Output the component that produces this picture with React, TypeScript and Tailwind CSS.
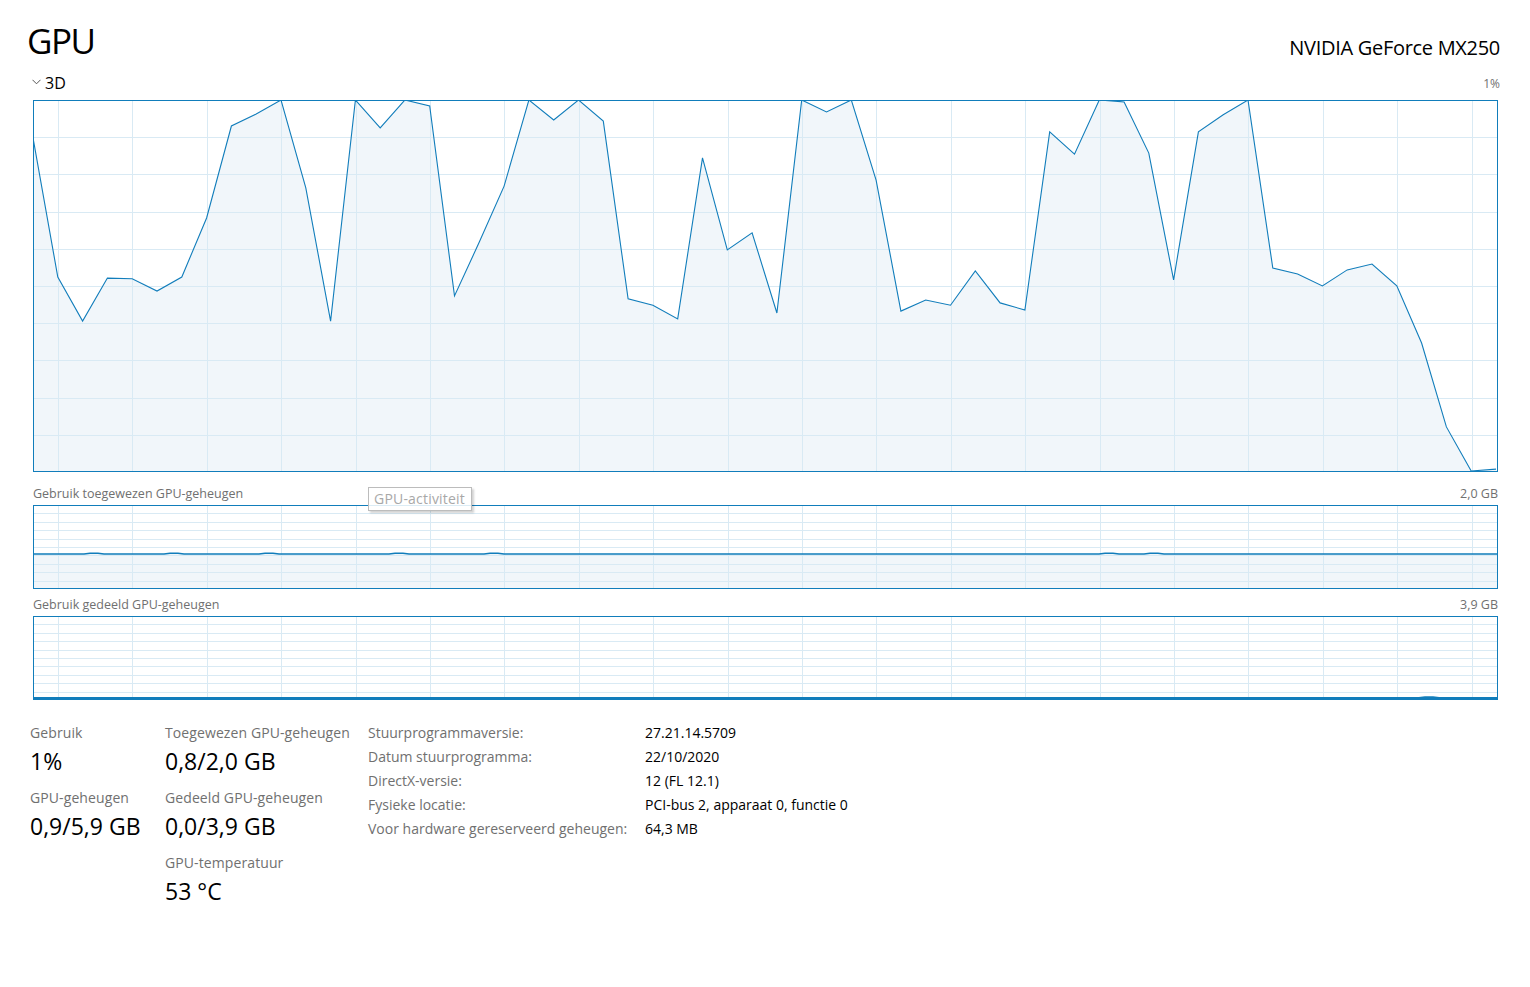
import React from "react";

// GPU usage (percent) for the last 60 samples, oldest first
const USAGE = [
  89.8, 52.3, 40.4, 52.0, 51.8, 48.5, 52.3, 68.2, 93.0, 96.2,
  100, 76.3, 40.4, 100, 92.5, 100, 98.4, 47.2, 61.7, 76.8,
  100, 94.6, 100, 94.3, 46.4, 44.7, 41.0, 84.4, 59.6, 64.2,
  42.6, 100, 96.8, 100, 78.4, 43.1, 46.1, 44.7, 53.9, 45.3,
  43.4, 91.4, 85.4, 100, 99.5, 85.7, 51.5, 91.4, 96.0, 100,
  54.7, 53.1, 49.9, 54.2, 55.8, 49.9, 34.5, 11.9, 0, 0.5,
];

const W = 1463;
const STEP = W / 59;
const GRID = "#d9eaf4";
const LINE = "#117dbb";
const FILL = "#f1f6fa";

function VGrid({ h }: { h: number }) {
  const xs = Array.from({ length: 20 }, (_, j) => Math.round(24 + j * 74.4) + 0.5);
  return (
    <>
      {xs.map((x) => (
        <line key={x} x1={x} x2={x} y1={0} y2={h} stroke={GRID} strokeWidth={1} />
      ))}
    </>
  );
}

function HGrid({ h, rows }: { h: number; rows: number }) {
  const ys = Array.from({ length: rows - 1 }, (_, k) => Math.round(((k + 1) * (h + 2)) / rows) - 1 + 0.5);
  return (
    <>
      {ys.map((y) => (
        <line key={y} x1={0} x2={W} y1={y} y2={y} stroke={GRID} strokeWidth={1} />
      ))}
    </>
  );
}

function UsageChart() {
  const H = 370;
  const pts = USAGE.map((v, i) => `${(-1 + i * STEP).toFixed(1)},${(H - v * 3.71).toFixed(1)}`);
  const area = [...pts, `${W},${H}`, `-1,${H}`].join(" ");
  return (
    <svg width={W} height={H} className="block">
      <polygon points={area} fill={FILL} />
      <HGrid h={H} rows={10} />
      <VGrid h={H} />
      <polyline points={pts.join(" ")} fill="none" stroke={LINE} strokeWidth={1.1} />
    </svg>
  );
}

function MemChart({ level, bumps, thick }: { level: number; bumps: number[]; thick?: boolean }) {
  const H = 82;
  const y = level;
  const pts: string[] = [`0,${y}`];
  bumps.forEach((b) => {
    pts.push(`${b},${y}`, `${b + 6},${y - 0.8}`, `${b + 14},${y - 0.8}`, `${b + 20},${y}`);
  });
  pts.push(`${W},${y}`);
  return (
    <svg width={W} height={H} className="block">
      <rect x={0} y={y} width={W} height={H - y} fill={FILL} />
      <HGrid h={H} rows={10} />
      <VGrid h={H} />
      <polyline points={pts.join(" ")} fill="none" stroke={LINE} strokeWidth={thick ? 3 : 1.5} />
    </svg>
  );
}

function Stat({ label, value }: { label: string; value: string }) {
  return (
    <div className="flex flex-col mb-[11px]">
      <span className="text-[14px] leading-[20px] text-[#707070] tracking-[0.1px]">{label}</span>
      <span className="mt-[2px] text-[23px] leading-[32px] text-black">{value}</span>
    </div>
  );
}

const DETAILS: [string, string][] = [
  ["Stuurprogrammaversie:", "27.21.14.5709"],
  ["Datum stuurprogramma:", "22/10/2020"],
  ["DirectX-versie:", "12 (FL 12.1)"],
  ["Fysieke locatie:", "PCI-bus 2, apparaat 0, functie 0"],
  ["Voor hardware gereserveerd geheugen:", "64,3 MB"],
];

export default function App() {
  return (
    <div className="w-[1530px] h-[987px] bg-white overflow-hidden font-['Open_Sans','Noto_Sans',sans-serif] text-black">
      <div className="flex items-baseline justify-between pl-[27px] pr-[30px] pt-[21px]">
        <h1 className="text-[35px] leading-[40px] font-normal tracking-[-1.5px]">GPU</h1>
        <span className="text-[20px] leading-[26px] tracking-[-0.3px] relative top-[1px]">NVIDIA GeForce MX250</span>
      </div>

      <div className="flex items-center justify-between pl-[32px] pr-[30px] mt-[12px] h-[20px]">
        <div className="flex items-center gap-[4px]">
          <svg width="9" height="6" viewBox="0 0 9 6" className="mt-[-2px]">
            <polyline points="0.5,0.8 4.5,4.8 8.5,0.8" fill="none" stroke="#555" strokeWidth="1" />
          </svg>
          <span className="text-[16px] leading-[20px]">3D</span>
        </div>
        <span className="text-[12px] leading-[16px] text-[#707070] mt-[1px]">1%</span>
      </div>

      <div className="ml-[33px] mr-[32px] mt-[7px] border border-[#117dbb] h-[372px] overflow-hidden">
        <UsageChart />
      </div>

      <div className="relative ml-[33px] mr-[32px] mt-[12px]">
        <div className="flex justify-between text-[12.5px] leading-[16px] text-[#707070] pt-[2px]">
          <span>Gebruik toegewezen GPU-geheugen</span>
          <span>2,0 GB</span>
        </div>
        <div className="mt-[3px] border border-[#117dbb] h-[84px] overflow-hidden">
          <MemChart level={48} bumps={[50, 130, 225, 355, 450, 1065, 1110]} />
        </div>
        <div className="absolute left-[335px] top-[3px] w-[104px] h-[24px] border border-[#bcbcbc] bg-white/85 shadow-[2px_2px_2px_rgba(0,0,0,0.18)] px-[5px] text-[14px] leading-[22px] text-[#a8a8a8] tracking-[0.2px]">
          GPU-activiteit
        </div>
      </div>

      <div className="ml-[33px] mr-[32px] mt-[6px]">
        <div className="flex justify-between text-[12.5px] leading-[16px] text-[#707070] pt-[2px]">
          <span>Gebruik gedeeld GPU-geheugen</span>
          <span>3,9 GB</span>
        </div>
        <div className="mt-[3px] border border-[#117dbb] h-[84px] overflow-hidden">
          <MemChart level={81.5} bumps={[1385]} thick />
        </div>
      </div>

      <div className="flex pl-[30px] mt-[23px]">
        <div className="w-[135px] flex flex-col">
          <Stat label="Gebruik" value="1%" />
          <Stat label="GPU-geheugen" value="0,9/5,9 GB" />
        </div>
        <div className="w-[203px] flex flex-col">
          <Stat label="Toegewezen GPU-geheugen" value="0,8/2,0 GB" />
          <Stat label="Gedeeld GPU-geheugen" value="0,0/3,9 GB" />
          <Stat label="GPU-temperatuur" value="53 °C" />
        </div>
        <div className="grid grid-cols-[277px_auto] gap-y-[4px] text-[14px] leading-[20px] self-start">
          {DETAILS.map(([k, v]) => (
            <React.Fragment key={k}>
              <span className="text-[#707070]">{k}</span>
              <span>{v}</span>
            </React.Fragment>
          ))}
        </div>
      </div>
    </div>
  );
}
